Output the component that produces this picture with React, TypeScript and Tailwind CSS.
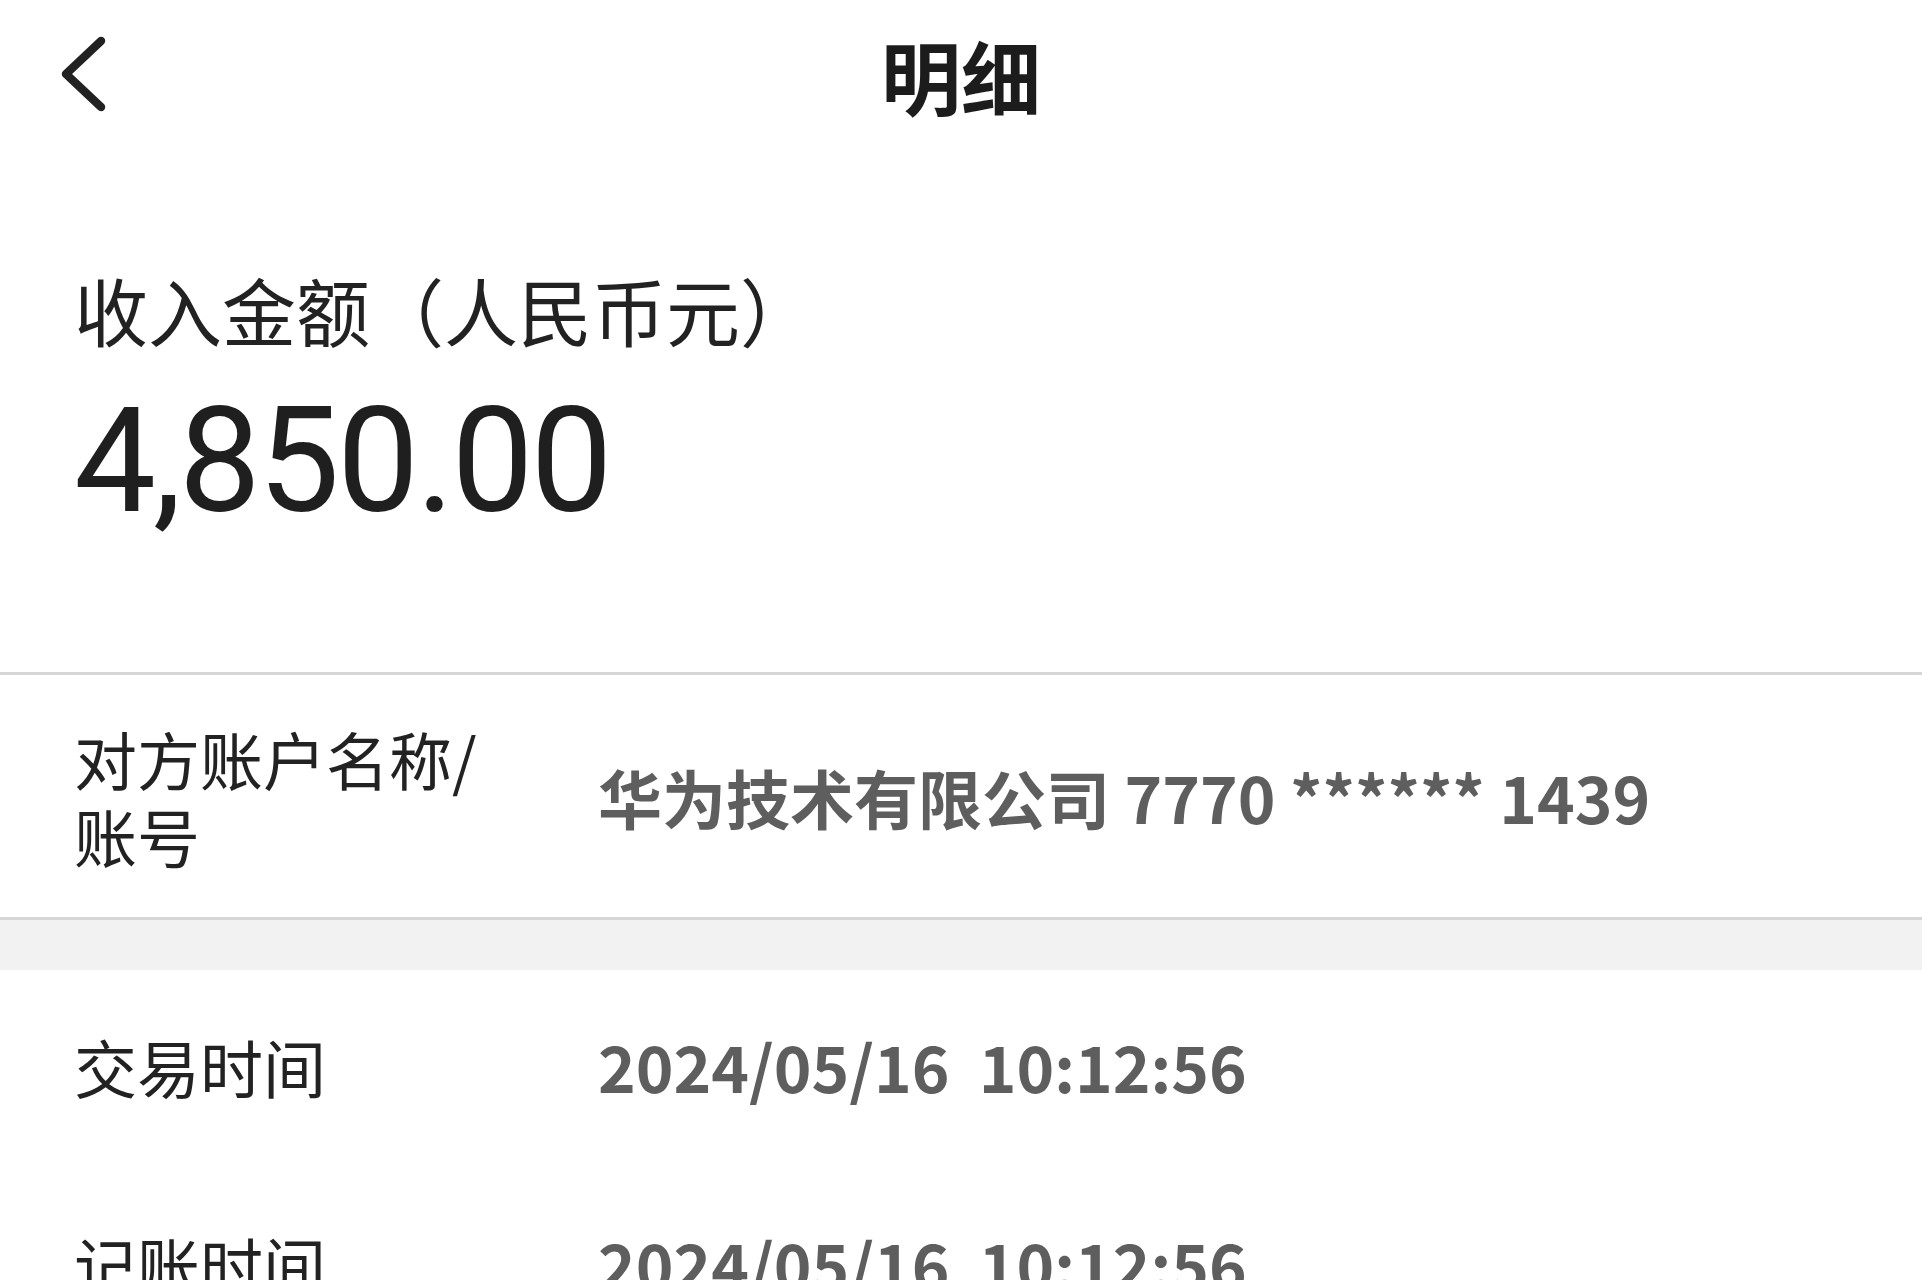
const cjk = { fontFamily: '"Noto Sans CJK SC", "Noto Sans", sans-serif' };

function BackIcon() {
  return (
    <svg width="50" height="76" viewBox="0 0 50 76" fill="none">
      <path d="M43 5 L8 38 L43 71" stroke="#222222" strokeWidth="8.5" strokeLinecap="round" strokeLinejoin="round" />
    </svg>
  );
}

function Row({ label, value, tall }: { label: string; value: string; tall?: boolean }) {
  return (
    <div className={`flex items-center px-[74px] ${tall ? "h-[242px]" : "h-[198px]"}`}>
      <div className="w-[524px] shrink-0 pr-[74px] text-[63px] leading-[77px] text-[#222222]" style={cjk}>
        {label}
      </div>
      <div className="whitespace-pre text-[64px] font-bold leading-none text-[#5e5e5e]" style={cjk}>
        {value}
      </div>
    </div>
  );
}

export default function App() {
  return (
    <div className="h-[1280px] w-full overflow-hidden bg-white">
      <header className="grid h-[160px] grid-cols-[1fr_auto_1fr] items-center pb-[12px]">
        <button className="flex items-center pl-[58px]">
          <BackIcon />
        </button>
        <h1 className="text-[80px] font-bold leading-none text-[#1c1c1c]" style={cjk}>
          明细
        </h1>
        <div />
      </header>

      <section className="px-[74px] pb-[137px] pt-[112px]">
        <div className="text-[74px] leading-none text-[#222222]" style={cjk}>
          收入金额（人民币元）
        </div>
        <div
          className="mt-[43px] text-[146px] leading-none tracking-[-3px] text-[#1f1f1f]"
          style={{ fontFamily: 'Roboto, "Liberation Sans", sans-serif' }}
        >
          4,850.00
        </div>
      </section>

      <div className="h-[3px] bg-[#d6d6d6]" />
      <Row label="对方账户名称/账号" value="华为技术有限公司 7770 ****** 1439" tall />
      <div className="h-[3px] bg-[#d6d6d6]" />
      <div className="h-[50px] bg-[#f2f2f2]" />

      <div className="-mt-[4px]">
        <Row label="交易时间" value="2024/05/16  10:12:56" />
        <Row label="记账时间" value="2024/05/16  10:12:56" />
      </div>
    </div>
  );
}
